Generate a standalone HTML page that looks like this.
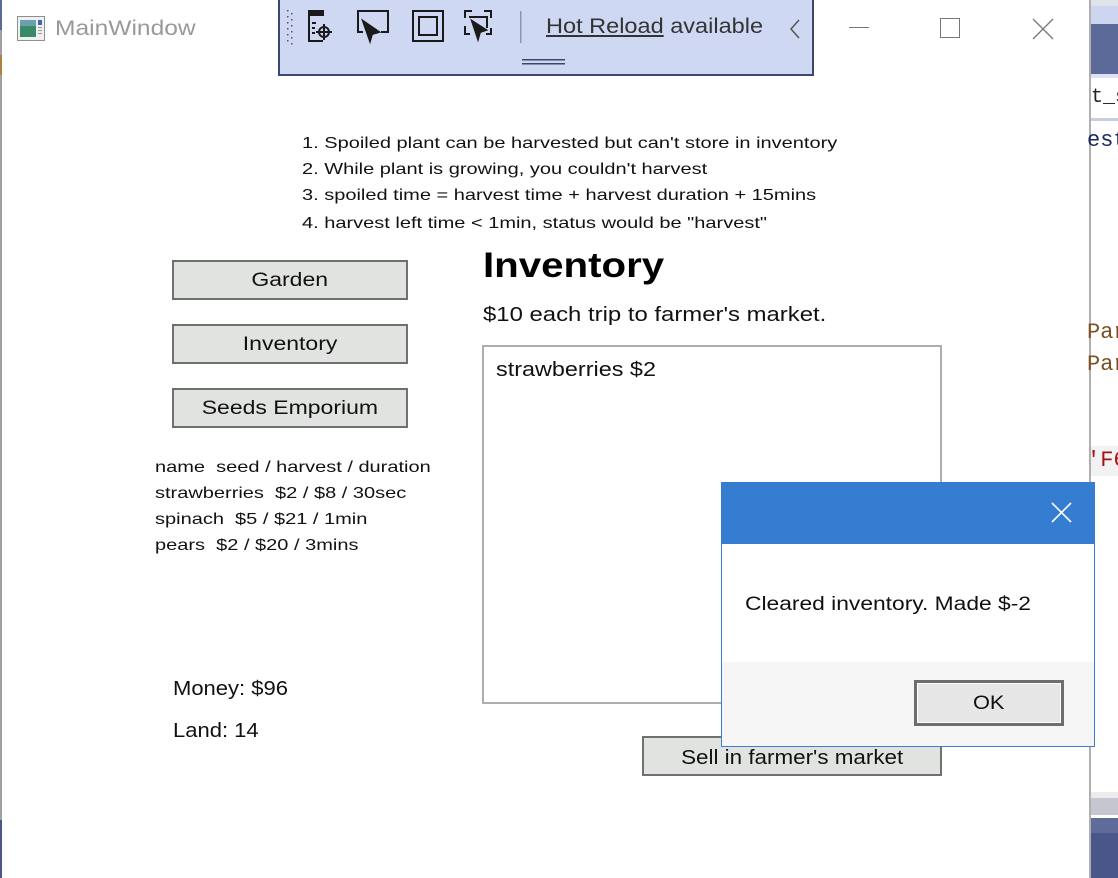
<!DOCTYPE html>
<html><head><meta charset="utf-8"><style>
*{margin:0;padding:0;box-sizing:border-box}
body{width:1118px;height:878px;overflow:hidden;background:#fff;position:relative;font-family:"Liberation Sans","DejaVu Sans",sans-serif;color:#000}
.a{position:absolute;white-space:nowrap}
.s{display:inline-block;transform-origin:left center}
.c{display:inline-block;transform-origin:center center}
.btn{position:absolute;background:#e1e3e0;border:2px solid #707070;text-align:center;font-size:19px;color:#111}
.notes div{font-size:16px;height:26px;line-height:26px;color:#111;transform:scaleX(1.25);transform-origin:left center}
.small div{font-size:16px;height:26px;line-height:26px;color:#111;transform:scaleX(1.25);transform-origin:left center}
</style></head><body>
<div class="a" style="left:0;top:0;width:2px;height:878px;background:#a0a0a0"></div>
<div class="a" style="left:0;top:0;width:2px;height:30px;background:#5c6a99"></div>
<div class="a" style="left:0;top:55px;width:2px;height:20px;background:#b08040"></div>
<div class="a" style="left:0;top:820px;width:2px;height:58px;background:#4a5688"></div>
<div class="a" style="left:1089px;top:0;width:2px;height:878px;background:#b0b0b0"></div>
<div class="a" style="left:1091px;top:0;width:27px;height:878px;background:#fff"></div>
<div class="a" style="left:1091px;top:0;width:27px;height:6px;background:#dfe3ea"></div>
<div class="a" style="left:1091px;top:6px;width:27px;height:18px;background:#cdd5f0"></div>
<div class="a" style="left:1091px;top:24px;width:27px;height:50px;background:#5c6a99"></div>
<div class="a" style="left:1091px;top:74px;width:27px;height:4px;background:#dde3f5"></div>
<div class="a" style="left:1091px;top:118px;width:27px;height:3px;background:#c8cde0"></div>
<div class="a" style="left:1091px;top:86px;font:20px 'Liberation Mono',monospace;color:#222">t_se</div>
<div class="a" style="left:1087px;top:128px;font:22px 'Liberation Mono',monospace;color:#1a2a60">est</div>
<div class="a" style="left:1087px;top:320px;font:22px 'Liberation Mono',monospace;color:#7a5020">Par</div>
<div class="a" style="left:1087px;top:352px;font:22px 'Liberation Mono',monospace;color:#7a5020">Par</div>
<div class="a" style="left:1091px;top:446px;width:27px;height:30px;background:#f2f2f4"></div>
<div class="a" style="left:1087px;top:448px;font:22px 'Liberation Mono',monospace;color:#a31515">'F6</div>
<div class="a" style="left:1091px;top:792px;width:27px;height:6px;background:#ececec"></div>
<div class="a" style="left:1091px;top:798px;width:27px;height:17px;background:#c5c6cf"></div>
<div class="a" style="left:1091px;top:818px;width:27px;height:15px;background:#5f6c9a"></div>
<div class="a" style="left:1091px;top:833px;width:27px;height:45px;background:#4a5688"></div>
<svg class="a" style="left:17px;top:16px" width="29" height="26" viewBox="0 0 29 26">
<rect x="0.5" y="0.5" width="27" height="24" fill="#f0f0f0" stroke="#909090"/>
<rect x="3" y="4" width="16" height="17" fill="#3a8a6a"/><rect x="3" y="4" width="16" height="6" fill="#6aa0b0"/>
<rect x="21" y="4" width="4" height="5" fill="#3a6ab0"/><rect x="21" y="11" width="4" height="1" fill="#999"/><rect x="21" y="14" width="4" height="1" fill="#999"/><rect x="21" y="17" width="4" height="1" fill="#999"/>
</svg>
<div class="a" style="left:55px;top:17px;font-size:21px;color:#999"><span class="s" style="transform:scaleX(1.17)">MainWindow</span></div>
<div class="a" style="left:849px;top:27px;width:20px;height:1px;background:#777"></div>
<div class="a" style="left:940px;top:18px;width:20px;height:20px;border:1px solid #777"></div>
<svg class="a" style="left:1032px;top:18px" width="22" height="22"><path d="M1 1L21 21M21 1L1 21" stroke="#777" stroke-width="1.3"/></svg>
<div class="a" style="left:278px;top:0;width:536px;height:76px;background:#cfd8f3;border:2px solid #3c4670;border-top:none"></div>
<svg class="a" style="left:285px;top:8px" width="280" height="60" viewBox="0 0 280 60">
<g fill="#555"><rect x="2" y="2" width="1.5" height="1.5"/><rect x="6" y="5" width="1.5" height="1.5"/><rect x="2" y="8" width="1.5" height="1.5"/><rect x="6" y="11" width="1.5" height="1.5"/><rect x="2" y="14" width="1.5" height="1.5"/><rect x="6" y="17" width="1.5" height="1.5"/><rect x="2" y="20" width="1.5" height="1.5"/><rect x="6" y="23" width="1.5" height="1.5"/><rect x="2" y="26" width="1.5" height="1.5"/><rect x="6" y="29" width="1.5" height="1.5"/><rect x="2" y="32" width="1.5" height="1.5"/><rect x="6" y="35" width="1.5" height="1.5"/></g>
<g stroke="#1a1a1a" stroke-width="2" fill="none">
<path d="M24 3H38M24 3V33H38M24 3h14v4H24"/><rect x="24" y="3" width="14" height="3" fill="#1a1a1a"/>
<path d="M27 15h4M27 20h3M27 25h3"/><circle cx="39" cy="24" r="5"/><path d="M39 16v16M31 24h16"/>
<path d="M78 24H73V3H103V24H96"/><path d="M78 13L94 24L87 26L85 33Z" fill="#1a1a1a"/>
<rect x="128" y="3" width="30" height="30"/><rect x="134" y="9" width="18" height="18"/>
<path d="M180 10V3H187M199 3H206V10M206 20V26H201M180 18V26H185"/><path d="M184 9H202V20"/><path d="M187 13L201 22L195 24L193 31Z" fill="#1a1a1a"/>
</g>
<rect x="235" y="3" width="1.5" height="32" fill="#8b96b8"/>
<rect x="237" y="51" width="48" height="1.5" fill="#3c4670"/><rect x="237" y="55" width="48" height="1.5" fill="#3c4670"/>
</svg>
<div class="a" style="left:546px;top:15px;font-size:21px;color:#333"><span class="s" style="transform:scaleX(1.12)"><span style="text-decoration:underline">Hot Reload</span> available</span></div>
<svg class="a" style="left:788px;top:18px" width="14" height="22"><path d="M11 2L3 11L11 20" stroke="#555" stroke-width="1.5" fill="none"/></svg>
<div class="a notes" style="left:302px;top:131px">
<div>1. Spoiled plant can be harvested but can't store in inventory</div>
<div>2. While plant is growing, you couldn't harvest</div>
<div>3. spoiled time = harvest time + harvest duration + 15mins</div>
<div style="margin-top:2px">4. harvest left time &lt; 1min, status would be "harvest"</div>
</div>
<div class="btn" style="left:172px;top:260px;width:236px;height:40px;line-height:38px"><span class="c" style="transform:scaleX(1.21)">Garden</span></div>
<div class="btn" style="left:172px;top:324px;width:236px;height:40px;line-height:38px"><span class="c" style="transform:scaleX(1.21)">Inventory</span></div>
<div class="btn" style="left:172px;top:388px;width:236px;height:40px;line-height:38px"><span class="c" style="transform:scaleX(1.21)">Seeds Emporium</span></div>
<div class="a small" style="left:155px;top:455px">
<div>name&nbsp; seed / harvest / duration</div>
<div>strawberries&nbsp; $2 / $8 / 30sec</div>
<div>spinach&nbsp; $5 / $21 / 1min</div>
<div>pears&nbsp; $2 / $20 / 3mins</div>
</div>
<div class="a" style="left:173px;top:678px;font-size:20px;color:#111"><span class="s" style="transform:scaleX(1.1)">Money: $96</span></div>
<div class="a" style="left:173px;top:720px;font-size:20px;color:#111"><span class="s" style="transform:scaleX(1.1)">Land: 14</span></div>
<div class="a" style="left:483px;top:246px;font-size:35px;font-weight:bold"><span class="s" style="transform:scaleX(1.15)">Inventory</span></div>
<div class="a" style="left:483px;top:304px;font-size:20px;color:#111"><span class="s" style="transform:scaleX(1.195)">$10 each trip to farmer's market.</span></div>
<div class="a" style="left:482px;top:345px;width:460px;height:359px;border:2px solid #adadad"></div>
<div class="a" style="left:496px;top:359px;font-size:20px;color:#111"><span class="s" style="transform:scaleX(1.17)">strawberries $2</span></div>
<div class="btn" style="left:642px;top:736px;width:300px;height:40px;line-height:40px;font-size:20px"><span class="c" style="transform:scaleX(1.12)">Sell in farmer's market</span></div>
<div class="a" style="left:721px;top:482px;width:374px;height:265px;border:1px solid #3a7fd0;background:#fff"></div>
<div class="a" style="left:721px;top:482px;width:374px;height:62px;background:#347dd1"></div>
<svg class="a" style="left:1051px;top:502px" width="21" height="21"><path d="M1 1L20 20M20 1L1 20" stroke="#fff" stroke-width="1.6"/></svg>
<div class="a" style="left:745px;top:594px;font-size:19px;color:#111"><span class="s" style="transform:scaleX(1.2)">Cleared inventory. Made $-2</span></div>
<div class="a" style="left:722px;top:662px;width:372px;height:84px;background:#f6f6f6"></div>
<div class="a" style="left:914px;top:680px;width:150px;height:46px;border:3px solid #6e6e6e;background:#e6e6e6;box-shadow:inset 0 0 0 1px #fdfdfd;text-align:center;line-height:42px;font-size:19px;color:#111"><span class="c" style="transform:scaleX(1.15)">OK</span></div>
</body></html>
